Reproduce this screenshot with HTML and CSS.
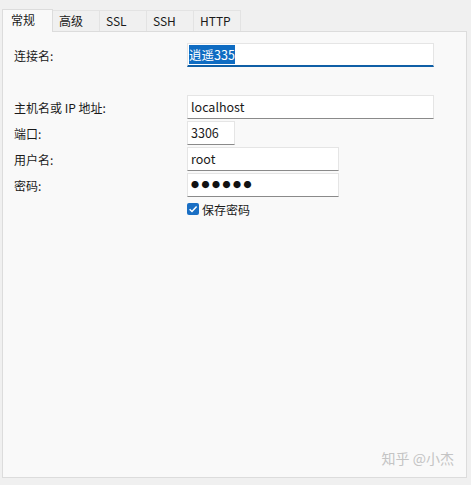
FILE: index.html
```html
<!DOCTYPE html>
<html lang="zh-CN">
<head>
    <meta charset="UTF-8">
    <title>新建连接</title>
    <link rel="stylesheet" href="styles.css">
</head>
<body>
    <div class="dialog">
        <!-- Tabs -->
        <div class="tabs">
            <div class="tab active">常规</div>
            <div class="tab">高级</div>
            <div class="tab">SSL</div>
            <div class="tab">SSH</div>
            <div class="tab">HTTP</div>
        </div>

        <!-- General page -->
        <div class="panel">
            <div class="row">
                <label class="label">连接名:</label>
                <div class="field wide focused"><span class="selected">逍遥335</span></div>
            </div>

            <div class="spacer"></div>

            <div class="row">
                <label class="label">主机名或 IP 地址:</label>
                <div class="field wide">localhost</div>
            </div>
            <div class="row">
                <label class="label">端口:</label>
                <div class="field short">3306</div>
            </div>
            <div class="row">
                <label class="label">用户名:</label>
                <div class="field mid">root</div>
            </div>
            <div class="row">
                <label class="label">密码:</label>
                <div class="field mid dots">●●●●●●</div>
            </div>
            <div class="row check-row">
                <span class="label"></span>
                <span class="checkbox">
                    <svg width="12" height="12" viewBox="0 0 12 12">
                        <rect width="12" height="12" rx="2" fill="#1a6fc4"/>
                        <path d="M2.6 6.2 L5 8.5 L9.6 3.6" fill="none" stroke="#fff" stroke-width="1.5"/>
                    </svg>
                </span>
                <span class="check-text">保存密码</span>
            </div>

            <div class="watermark">知乎 @小杰</div>
        </div>
    </div>
</body>
</html>
```

FILE: styles.css
```css
body {
    margin: 0;
    background-color: #f0f0f0;
    font-family: "Microsoft YaHei UI", "Noto Sans CJK SC", sans-serif;
    font-size: 12px;
    color: #1a1a1a;
}
.dialog {
    width: 471px;
    height: 485px;
    padding: 8px 4px 7px 2px;
    box-sizing: border-box;
    display: flex;
    flex-direction: column;
}
.tabs {
    display: flex;
    align-items: flex-end;
    height: 23px;
}
.tab {
    width: 48px;
    height: 21px;
    line-height: 20px;
    padding-left: 6px;
    box-sizing: border-box;
    background-color: #f0f0f0;
    border: 1px solid #e3e3e3;
    border-bottom: none;
    margin-right: -1px;
}
.tab.active {
    width: 51px;
    height: 23px;
    line-height: 20px;
    padding-left: 8px;
    background-color: #f9f9f9;
    border-color: #dcdcdc;
    position: relative;
    z-index: 1;
    margin-bottom: -1px;
}
.panel {
    flex: 1;
    position: relative;
    background-color: #f9f9f9;
    border: 1px solid #dcdcdc;
    padding: 11px 0 0 11px;
}
.row {
    display: flex;
    align-items: center;
    height: 24px;
    margin-bottom: 2px;
}
.label {
    width: 173px;
    flex-shrink: 0;
}
.spacer {
    height: 26px;
}
.field {
    height: 24px;
    line-height: 22px;
    box-sizing: border-box;
    padding-left: 3px;
    background-color: #fff;
    border: 1px solid #e5e5e5;
    border-bottom-color: #8a8a8a;
    font-size: 12.5px;
    font-family: "Segoe UI", "Noto Sans CJK SC", sans-serif;
}
.field.wide {
    width: 247px;
}
.field.mid {
    width: 152px;
}
.field.short {
    width: 48px;
}
.field.focused {
    border-bottom: 2px solid #0f5fa6;
    line-height: 21px;
    padding-left: 1px;
}
.selected {
    background-color: #0f6cc2;
    color: #fff;
}
.dots {
    font-size: 8px;
    letter-spacing: 2.5px;
    color: #111;
}
.check-row {
    height: 20px;
    margin-top: 2px;
}
.checkbox {
    width: 12px;
    height: 12px;
    display: flex;
    margin-right: 3px;
}
.check-text {
    font-size: 12px;
}
.watermark {
    position: absolute;
    right: 12px;
    bottom: 9px;
    color: #c4c4c4;
    font-size: 14px;
}
```
